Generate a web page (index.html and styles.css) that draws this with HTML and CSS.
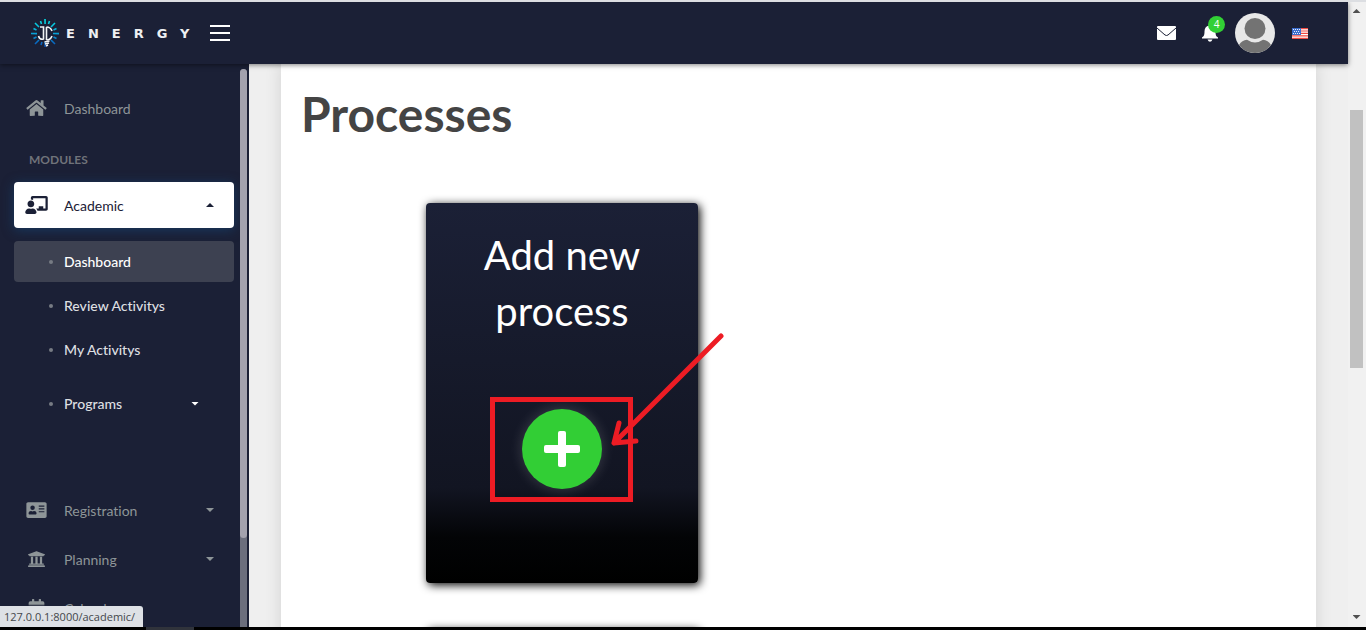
FILE: index.html
```html
<!DOCTYPE html>
<html lang="en">
<head>
<meta charset="utf-8">
<title>Processes</title>
<link rel="stylesheet" href="styles.css">
</head>
<body>
<div class="window">
  <div class="app">
    <header class="topbar">
      <a class="brand" href="#">
        <svg class="brand-mark" viewBox="0 0 30 32" aria-hidden="true">
          <defs><linearGradient id="rays" gradientUnits="userSpaceOnUse" x1="0" y1="1" x2="0" y2="30"><stop offset="0" stop-color="#05e4e4"/><stop offset=".5" stop-color="#08a6d8"/><stop offset="1" stop-color="#0a50b8"/></linearGradient></defs>
          <g stroke="url(#rays)" stroke-width="1.600"><path d="M15 2l.1 5M5 6l4 4M25 6l-4 4M1 16.500l6 .1M23 16.500l6 .1M5 27l4-4M25 27l-4-4M10.500 4l1 3M19.500 4l-1 3M3.500 11.500l3 1.500M26.500 11.500l-3 1.500M3.500 21.500l3-1.500M26.500 21.500l-3-1.500M11 28l1-3M15 25l.1 5"/></g>
          <g fill="none" stroke="#f2f4f6" stroke-width="1.600"><path d="M10 10h3.500v12q-4 1-5-3M16.500 10v13"/><path d="M22 14q-1.500-4-5.500-4M22 19q-1.500 4-5.500 4"/><path d="M14.500 25l5-1M15 27l4-1M16 29l2-1" stroke-width="1.500"/></g>
        </svg>
        <span class="brand-name">ENERGY</span>
      </a>
      <button class="menu-toggle" aria-label="Toggle menu"><i></i><i></i><i></i></button>
      <div class="actions">
        <button class="icon-button" aria-label="Messages"><svg width="20" height="14" viewBox="0 0 20 14"><rect x="1" width="19" height="14" rx="1" fill="#fff"/><path d="M1 2l8 7q1.500 1 3 0l8-7" fill="none" stroke="#1b2036" stroke-width="1"/></svg></button>
        <button class="icon-button bell" aria-label="Notifications"><svg width="18" height="18" viewBox="0 0 18 18" fill="#fff"><path d="M9 0q1 0 1 1.500c3 .5 4.500 3 4.500 6 0 4 1 5 2.500 6v1H1v-1c1.500-1 2.500-2 2.500-6 0-3 1.500-5.500 4.500-6Q8 0 9 0zM6.500 15.500h5q-1 2.200-2.500 2.200t-2.500-2.200z"/></svg><span class="badge">4</span></button>
        <button class="avatar" aria-label="Profile"><svg viewBox="0 0 40 40"><circle cx="20" cy="20" r="20" fill="#e8e8e8"/><circle cx="20" cy="15.500" r="10.500" fill="#737373"/><path d="M4 32q3-5 8-5.200 8 5.500 16 0 5 .2 8 5.200-6 8-16 8T4 32z" fill="#737373"/></svg></button>
        <button class="icon-button flag" aria-label="Language: English"><svg width="16" height="11" viewBox="0 0 16 11"><path fill="#fff" d="M0 0h16v11H0z"/><path stroke="#f04a42" stroke-width="1.200" d="M0 .6h16M0 3h16M0 5.400h16M0 7.800h16M0 10.300h16"/><path fill="#3c6dcc" d="M0 0h9v7H0z"/><path stroke="#e8efff" stroke-dasharray="1 1" d="M1 1.500h7M2 3.500h6M1 5.500h7"/></svg></button>
      </div>
    </header>
    <div class="body">
      <nav class="sidebar">
        <div class="menu">
          <a class="item" href="#"><svg class="ico" viewBox="0 0 576 512"><path d="M280.370 148.260L96 300.110V464a16 16 0 0 0 16 16l112.060-.29a16 16 0 0 0 15.920-16V368a16 16 0 0 1 16-16h64a16 16 0 0 1 16 16v95.640a16 16 0 0 0 16 16.050L464 480a16 16 0 0 0 16-16V300L295.670 148.260a12.190 12.190 0 0 0-15.300 0zM571.600 251.470L488 182.560V44.050a12 12 0 0 0-12-12h-56a12 12 0 0 0-12 12v72.610L318.470 43a48 48 0 0 0-61 0L4.340 251.470a12 12 0 0 0-1.600 16.900l25.500 31A12 12 0 0 0 45.150 301l235.220-193.740a12.190 12.190 0 0 1 15.300 0L530.900 301a12 12 0 0 0 16.900-1.600l25.500-31a12 12 0 0 0-1.700-16.930z"/></svg><span>Dashboard</span></a>
          <h2 class="section">MODULES</h2>
          <a class="item active" href="#"><svg class="ico" viewBox="0 0 640 512"><path d="M208 352c-2.390 0-4.780.35-7.060 1.090C187.980 357.300 174.350 360 160 360s-27.980-2.700-40.950-6.910c-2.280-.74-4.660-1.090-7.050-1.090C49.940 352-.33 402.480 0 464.620.14 490.880 21.730 512 48 512h224c26.270 0 47.860-21.120 48-47.380.33-62.140-49.940-112.620-112-112.620zm-48-32c53.020 0 96-42.980 96-96s-42.980-96-96-96-96 42.980-96 96 42.980 96 96 96zM592 0H208c-26.470 0-48 22.250-48 49.590V96c23.420 0 45.100 6.780 64 17.800V64h352v288h-64v-64H384v64h-76.240c19.100 16.690 33.120 38.730 39.690 64H592c26.470 0 48-22.250 48-49.590V49.590C640 22.250 618.470 0 592 0z"/></svg><span>Academic</span><i class="caret up"></i></a>
          <ul class="submenu">
            <li><a class="sub current" href="#">Dashboard</a></li>
            <li><a class="sub" href="#">Review Activitys</a></li>
            <li><a class="sub" href="#">My Activitys</a></li>
            <li class="group"><a class="sub" href="#">Programs<i class="caret"></i></a></li>
          </ul>
          <a class="item" href="#"><svg class="ico" viewBox="0 0 576 512"><path fill-rule="evenodd" d="M528 32H48C21.500 32 0 53.500 0 80v352c0 26.500 21.500 48 48 48h480c26.500 0 48-21.500 48-48V80c0-26.500-21.500-48-48-48zM176 128a64 64 0 1 1 0 128 64 64 0 0 1 0-128zm112 236.800c0 10.600-10 19.200-22.400 19.200H86.400C74 384 64 375.400 64 364.800v-19.200c0-31.800 30.100-57.600 67.200-57.600h5c12.300 5.100 25.700 8 39.800 8s27.600-2.900 39.800-8h5c37.100 0 67.200 25.800 67.200 57.600zM352 128h160v32H352zm0 80h160v32H352zm0 80h160v32H352z"/></svg><span>Registration</span><i class="caret"></i></a>
          <a class="item" href="#"><svg class="ico" viewBox="0 0 512 512"><path d="M496 128v16a8 8 0 0 1-8 8h-24v12c0 6.627-5.373 12-12 12H60c-6.627 0-12-5.373-12-12v-12H24a8 8 0 0 1-8-8v-16a8 8 0 0 1 4.941-7.392l232-88a7.996 7.996 0 0 1 6.118 0l232 88A8 8 0 0 1 496 128zm-24 304H40c-13.255 0-24 10.745-24 24v16a8 8 0 0 0 8 8h464a8 8 0 0 0 8-8v-16c0-13.255-10.745-24-24-24zM96 192v192H60c-6.627 0-12 5.373-12 12v20h416v-20c0-6.627-5.373-12-12-12h-36V192h-64v192h-64V192h-64v192h-64V192H96z"/></svg><span>Planning</span><i class="caret"></i></a>
          <a class="item" href="#"><svg class="ico" viewBox="0 0 512 512"><path d="M32 112q0-48 48-48h48V16q0-16 16-16h32q16 0 16 16v48h128V16q0-16 16-16h32q16 0 16 16v48h48q48 0 48 48v48H32zM32 192h448v272q0 48-48 48H80q-48 0-48-48z"/></svg><span>Calendar</span></a>
        </div>
        <div class="side-track"><div class="side-thumb"></div></div>
      </nav>
      <main class="content">
        <section class="panel">
          <h1>Processes</h1>
          <div class="cards">
            <article class="card">
              <h3>Add new process</h3>
              <button class="add" aria-label="Add new process"><svg width="36" height="36" viewBox="0 0 36 36" fill="#fff"><rect x="14" width="8" height="36" rx="2"/><rect y="14" width="36" height="8" rx="2"/></svg></button>
              <svg class="pointer" viewBox="0 0 240 175" aria-hidden="true"><g fill="none" stroke="#ed1c24" stroke-width="5"><path d="M2.500 66.500h138v100h-138z"/><path d="M231 3L124 110M129 90l-5 20 22-2" stroke-linecap="round" stroke-linejoin="round"/></g></svg>
            </article>
            <article class="card"></article>
          </div>
        </section>
      </main>
    </div>
  </div>
  <div class="scrollbar"><i class="caret up"></i><div class="thumb"></div><i class="caret"></i></div>
</div>
<footer class="taskbar"><i></i></footer>
<div class="status">127.0.0.1:8000/academic/</div>
</body>
</html>
```
FILE: styles.css
```css
* { box-sizing: border-box; }
body { margin: 0; height: 100vh; display: flex; flex-direction: column; overflow: hidden; font-family: Lato, "Open Sans", sans-serif; font-variant-ligatures: none; border-top: 2px solid #dcdee2; }
button { border: 0; padding: 0; background: none; font: inherit; display: flex; }
a { color: inherit; text-decoration: none; }
svg { display: block; }
.window { flex: 1; min-height: 0; display: flex; }
.app { flex: 1; min-width: 0; display: flex; flex-direction: column; }
.topbar { height: 62px; flex: none; display: flex; align-items: center; background: #1b2036; padding: 0 40px 0 30px; position: relative; z-index: 2; box-shadow: 0 1px 5px rgba(0,0,0,.5); }
.brand { display: flex; align-items: center; gap: 6px; width: 180px; color: #eef0f2; }
.brand-mark { width: 30px; height: 32px; flex: none; }
.brand-name { font: bold 13px "DejaVu Sans", sans-serif; letter-spacing: 13px; }
.menu-toggle { flex-direction: column; gap: 5px; width: 20px; }
.menu-toggle i { height: 2px; width: 20px; background: #fff; }
.actions { margin-left: auto; display: flex; align-items: center; }
.bell { position: relative; margin: 0 16px 0 25px; }
.badge { position: absolute; left: 7px; top: -8px; width: 17px; height: 17px; border-radius: 50%; background: #32d035; color: #fff; font: 10px/17px "Open Sans", sans-serif; text-align: center; }
.avatar { width: 40px; height: 40px; }
.avatar svg { width: 40px; }
.flag { margin-left: 17px; }
.body { flex: 1; min-height: 0; display: flex; }
.sidebar { width: 249px; flex: none; display: flex; background: #1b2036; overflow: hidden; }
.menu { width: 240px; padding: 21px 6px 0 14px; flex: none; }
.item { display: flex; align-items: center; height: 46px; margin-bottom: 3px; padding: 0 20px 0 10px; border-radius: 4px; color: #8e9598; font-size: 14px; }
.item .ico { width: 25px; height: 18px; margin-right: 15px; fill: currentColor; flex: none; }
.item.active { background: #fff; color: #1b2036; box-shadow: 0 2px 12px rgba(22,74,124,.6); margin-bottom: 13px; }
.caret { margin-left: auto; width: 8px; height: 4px; background: currentColor; clip-path: polygon(0 0, 100% 0, 50% 100%); }
.caret.up { clip-path: polygon(50% 0, 100% 100%, 0 100%); }
.section { margin: 21px 0 14px 15px; font-size: 12px; line-height: 16px; font-weight: 700; color: #70737a; }
.submenu { list-style: none; margin: 0 0 63px; padding: 0; }
.sub { display: flex; align-items: center; height: 41px; margin-bottom: 3px; padding: 0 35px; border-radius: 4px; color: #dddfe1; font-size: 14px; font-weight: 500; }
.sub::before { content: ""; width: 4px; height: 4px; border-radius: 50%; background: #777b84; margin-right: 11px; }
.sub.current { background: #3d4151; color: #fff; }
.group { margin-top: 13px; }
.sub .caret { color: #fff; }
.side-track { width: 7px; background: #6b6e7d; margin-top: 5px; border-radius: 4px 4px 0 0; }
.side-thumb { height: 84%; background: #a3a2ae; border-radius: 4px; }
.content { flex: 1; min-width: 0; background: #efefef; padding: 0 32px; overflow: hidden; }
.panel { background: #fff; box-shadow: 0 0 16px rgba(0,0,0,.12); padding: 20px 20px 0; min-height: 100%; }
h1 { margin: 0; font-size: 48px; line-height: 60px; color: #444; }
.cards { padding: 59px 0 0 125px; display: flex; flex-direction: column; gap: 45px; }
.card { position: relative; width: 272px; height: 380px; border-radius: 4px; background: linear-gradient(#1b2036, #121522 75%, #030406 88%, #000); box-shadow: 2px 2px 10px #000; display: flex; flex-direction: column; align-items: center; padding: 24px 40px; }
.card h3 { margin: 0 0 70px; color: #fff; font-size: 40px; line-height: 56px; font-weight: 400; text-align: center; }
.add { width: 80px; height: 80px; border-radius: 50%; background: #32ce35; align-items: center; justify-content: center; box-shadow: 0 0 14px rgba(255,255,255,.18); }
.pointer { position: absolute; left: 64px; top: 130px; width: 240px; height: 175px; pointer-events: none; }
.scrollbar { width: 18px; flex: none; background: #f1f1f1; color: #505050; display: flex; flex-direction: column; align-items: center; padding: 7px 1px 8px 0; }
.scrollbar .caret { margin: 0; flex: none; }
.scrollbar .thumb { width: 13px; height: 258px; margin: 97px 0 auto; background: #c1c1c1; }
.taskbar { flex: none; height: 3px; background: #000; padding-left: 146px; }
.taskbar i { display: block; width: 48px; height: 3px; background: #30333b; }
.status { position: absolute; left: 0; bottom: 3px; z-index: 3; background: #dee1e6; color: #44474b; padding: 0 8px 0 4px; border-radius: 0 3px 0 0; font: 11px/21px "Open Sans", sans-serif; }
```
